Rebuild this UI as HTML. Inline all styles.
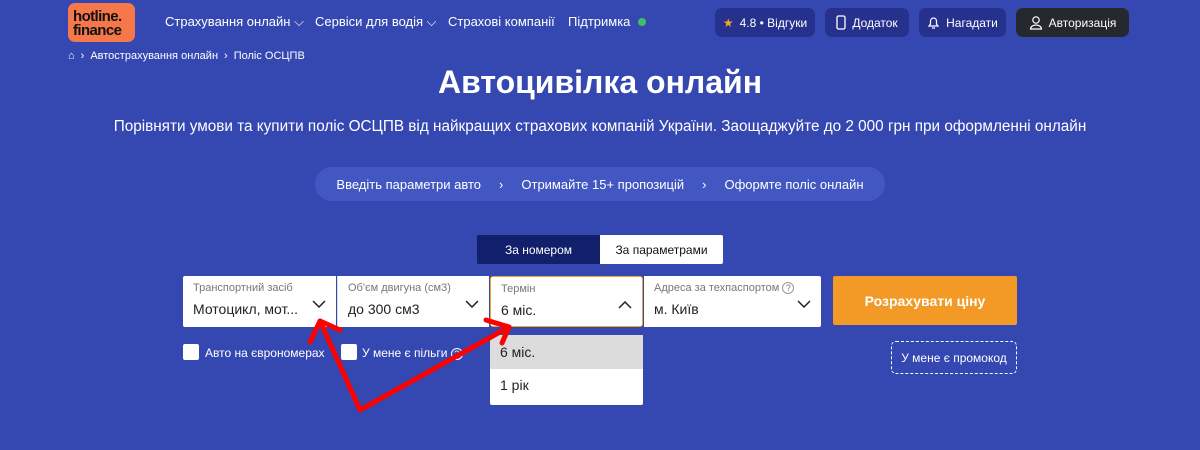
<!DOCTYPE html>
<html><head><meta charset="utf-8"><style>
*{box-sizing:border-box;margin:0;padding:0}
body{width:1200px;height:450px;background:#3547b1;font-family:"Liberation Sans",sans-serif;color:#fff;position:relative;overflow:hidden}
.abs{position:absolute}
.logo{left:68px;top:3px;width:67px;height:39px;background:#f5774a;border-radius:7px;color:#111;font-weight:bold;font-size:15px;line-height:14px;padding:7px 0 0 5px;letter-spacing:-0.6px}
.nav{top:14px;font-size:13px;white-space:nowrap}
.pill{top:8px;height:29px;border-radius:7px;background:#25318c;font-size:12px;display:flex;align-items:center;justify-content:center;gap:6px}
.crumb{top:50px;left:68px;font-size:11px;display:flex;gap:6px;align-items:center}
h1{position:absolute;top:64px;left:0;width:1200px;text-align:center;font-size:32px;font-weight:bold}
.sub{top:118px;left:0;width:1200px;text-align:center;font-size:15.3px}
.steps{left:315px;top:167px;width:570px;height:34px;border-radius:17px;background:#4357c3;font-size:13px;display:flex;align-items:center;justify-content:center;gap:18px}
.tab{top:235px;height:29px;font-size:12px;display:flex;align-items:center;justify-content:center}
.f{top:276px;height:51px;background:#fff;color:#222;padding:6px 10px}
.f .l{font-size:11px;color:#777}
.f .v{font-size:14px;margin-top:7px}
.chev{position:absolute;right:10px;top:24px}
.btn{left:833px;top:276px;width:184px;height:49px;background:#f39a26;border-radius:2px;font-size:14px;font-weight:bold;display:flex;align-items:center;justify-content:center}
.cb{top:344px;width:16px;height:16px;background:#fff;border-radius:2px}
.cl{top:346px;font-size:12px}
.promo{left:891px;top:341px;width:126px;height:33px;border:1.5px dashed #fff;border-radius:5px;font-size:12px;display:flex;align-items:center;justify-content:center}
.dd{left:490px;top:335px;width:153px;height:70px;background:#fff;color:#222;font-size:14px;border-radius:2px}
</style></head><body>
<div class="abs logo">hotline.<br>finance</div>
<div class="abs nav" style="left:165px">Страхування онлайн ⌵</div>
<div class="abs nav" style="left:315px">Сервіси для водія ⌵</div>
<div class="abs nav" style="left:448px">Страхові компанії</div>
<div class="abs nav" style="left:568px">Підтримка <span style="display:inline-block;width:8px;height:8px;border-radius:50%;background:#3ec06a;margin-left:4px"></span></div>
<div class="abs pill" style="left:715px;width:100px"><span style="color:#f5a623">★</span>4.8 • Відгуки</div>
<div class="abs pill" style="left:825px;width:84px"><svg width="10" height="15"><rect x="1" y="1" width="8" height="13" rx="1.5" fill="none" stroke="#fff" stroke-width="1.3"/></svg>Додаток</div>
<div class="abs pill" style="left:919px;width:87px"><svg width="13" height="15"><path d="M2 11h9l-1.5-2V6a3 3 0 0 0-6 0v3z M5 13h3" fill="none" stroke="#fff" stroke-width="1.2"/></svg>Нагадати</div>
<div class="abs pill" style="left:1016px;width:113px;background:#26282f"><svg width="14" height="15"><circle cx="7" cy="5" r="3.2" fill="none" stroke="#fff" stroke-width="1.2"/><path d="M1.5 14a5.5 4 0 0 1 11 0z" fill="none" stroke="#fff" stroke-width="1.2"/></svg>Авторизація</div>
<div class="abs crumb"><span>⌂</span><span>›</span><span>Автострахування онлайн</span><span>›</span><span>Поліс ОСЦПВ</span></div>
<h1>Автоцивілка онлайн</h1>
<div class="abs sub">Порівняти умови та купити поліс ОСЦПВ від найкращих страхових компаній України. Заощаджуйте до 2 000 грн при оформленні онлайн</div>
<div class="abs steps"><span>Введіть параметри авто</span><span>›</span><span>Отримайте 15+ пропозицій</span><span>›</span><span>Оформте поліс онлайн</span></div>
<div class="abs tab" style="left:477px;width:123px;background:#121f6a;border-radius:2px 0 0 2px">За номером</div>
<div class="abs tab" style="left:600px;width:123px;background:#fff;color:#111;border-radius:0 2px 2px 0">За параметрами</div>
<div class="abs f" style="left:183px;width:153px;border-radius:2px 0 0 2px"><div class="l">Транспортний засіб</div><div class="v">Мотоцикл, мот...</div><svg class="chev" width="14" height="8"><path d="M1 1l6 6 6-6" fill="none" stroke="#222" stroke-width="1.5"/></svg></div>
<div class="abs f" style="left:337px;width:152px;border-left:1px solid #ddd"><div class="l">Об'єм двигуна (см3)</div><div class="v">до 300 см3</div><svg class="chev" width="14" height="8"><path d="M1 1l6 6 6-6" fill="none" stroke="#222" stroke-width="1.5"/></svg></div>
<div class="abs f" style="left:490px;width:153px;border:1.5px solid #f5a623;border-radius:3px"><div class="l">Термін</div><div class="v">6 міс.</div><svg class="chev" width="14" height="8"><path d="M1 7l6-6 6 6" fill="none" stroke="#222" stroke-width="1.5"/></svg></div>
<div class="abs f" style="left:644px;width:177px;border-radius:0 2px 2px 0"><div class="l">Адреса за техпаспортом <span style="display:inline-block;width:12px;height:12px;border:1px solid #999;border-radius:50%;font-size:9px;text-align:center;line-height:10px">?</span></div><div class="v">м. Київ</div><svg class="chev" width="14" height="8"><path d="M1 1l6 6 6-6" fill="none" stroke="#222" stroke-width="1.5"/></svg></div>
<div class="abs btn">Розрахувати ціну</div>
<div class="abs cb" style="left:183px"></div><div class="abs cl" style="left:205px">Авто на єврономерах</div>
<div class="abs cb" style="left:341px"></div><div class="abs cl" style="left:362px">У мене є пільги <span style="display:inline-block;width:12px;height:12px;border:1px solid #fff;border-radius:50%;font-size:9px;text-align:center;line-height:10px">?</span></div>
<div class="abs promo">У мене є промокод</div>
<div class="abs dd"><div style="height:34px;background:#dcdcdc;padding:9px 10px">6 міс.</div><div style="padding:8px 10px">1 рік</div></div>
<svg class="abs" style="left:0;top:0" width="1200" height="450"><g fill="none" stroke="#f00" stroke-width="5" stroke-linecap="round" stroke-linejoin="round"><path d="M320 321L360 410L509 327"/><path d="M310 342L320 321L340 330"/><path d="M486 320L509 327L502 343"/></g></svg>
</body></html>
